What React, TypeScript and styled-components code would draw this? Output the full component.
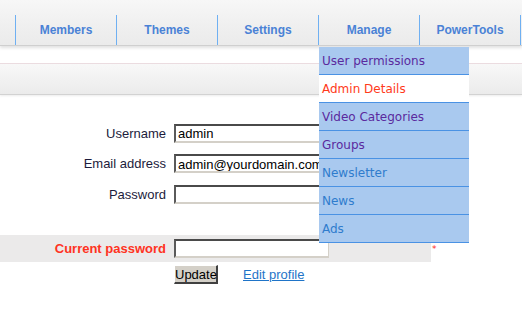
import React from "react";
import styled, { createGlobalStyle } from "styled-components";

const Global = createGlobalStyle`
  html, body { margin: 0; padding: 0; background: #ffffff; }
  body { font-family: "Liberation Sans", Arial, sans-serif; overflow: hidden; }
`;

const Page = styled.div`
  width: 522px;
  height: 326px;
  position: relative;
  overflow: hidden;
  background: #fff;
`;

const NavBar = styled.div`
  height: 45px;
  background: linear-gradient(#f7f7f7, #efefef 60%, #ebebeb);
  border-bottom: 1px solid #cfcfcf;
  box-shadow: 0 2px 3px rgba(0, 0, 0, 0.12);
  display: flex;
  align-items: flex-end;
  padding-left: 15px;
  position: relative;
  z-index: 2;
`;

const Tab = styled.div`
  position: relative;
  width: 101px;
  height: 30px;
  border-left: 1px solid #6fb0f2;
  display: flex;
  align-items: center;
  justify-content: center;
  font-family: "Liberation Sans", Arial, sans-serif;
  font-weight: bold;
  font-size: 12px;
  color: #4a82d6;
  padding-bottom: 1px;
  box-sizing: border-box;
`;

const LastEdge = styled.div`
  width: 1px;
  height: 30px;
  border-left: 1px solid #6fb0f2;
`;

const Menu = styled.ul`
  position: absolute;
  top: 32px;
  left: 0;
  width: 150px;
  margin: 0;
  padding: 0;
  list-style: none;
  z-index: 5;
`;

const MenuItem = styled.li<{ $active?: boolean; $tone: "visited" | "link" | "current" }>`
  height: 27px;
  border-bottom: 1px solid #4a92e4;
  background: ${(p) => (p.$active ? "#ffffff" : "#a9c9ef")};
  color: ${(p) =>
    p.$tone === "current" ? "#ff3a1a" : p.$tone === "visited" ? "#5b2a9e" : "#2f7ccd"};
  font-family: "DejaVu Sans", Verdana, sans-serif;
  font-size: 12px;
  font-weight: normal;
  line-height: 29px;
  padding-left: 3px;
  text-align: left;
  white-space: nowrap;
`;

const Gap = styled.div`
  height: 17px;
  border-bottom: 1px solid #ecdde1;
`;

const SubBar = styled.div`
  height: 30px;
  background: linear-gradient(#f8f8f8, #efefef 70%, #ebebeb);
  border-bottom: 1px solid #d2d2d2;
  box-shadow: 0 1px 2px rgba(0, 0, 0, 0.08);
`;

const Form = styled.div`
  margin-top: 23px;
  width: 431px;
`;

const Row = styled.div<{ $h: number; $band?: boolean }>`
  display: flex;
  align-items: center;
  height: ${(p) => p.$h}px;
  background: ${(p) => (p.$band ? "#ebeaea" : "transparent")};
  position: relative;
`;

const Label = styled.label<{ $required?: boolean }>`
  width: 166px;
  margin-right: 8px;
  text-align: right;
  font-family: "Liberation Sans", Arial, sans-serif;
  font-size: 13px;
  font-weight: ${(p) => (p.$required ? "bold" : "normal")};
  color: ${(p) => (p.$required ? "#ff3322" : "#1c1c3c")};
`;

const Field = styled.input`
  width: 155px;
  height: 19px;
  box-sizing: border-box;
  margin: 0;
  padding: 1px 2px 0;
  border-style: solid;
  border-width: 2px 1px 2px 2px;
  border-color: #4a4a4a #d4d0c8 #d4d0c8 #5a5a5a;
  background: #fff;
  font-family: "Liberation Sans", Arial, sans-serif;
  font-size: 13px;
  color: #000;
  outline: none;
`;

const Star = styled.span`
  position: absolute;
  left: 432px;
  top: 10px;
  color: #ff2a1a;
  font-size: 9px;
  font-family: "DejaVu Sans", sans-serif;
  line-height: 9px;
`;

const Actions = styled.div`
  display: flex;
  align-items: center;
  margin-top: 3px;
  padding-left: 174px;
`;

const Button = styled.button`
  height: 19px;
  padding: 0;
  width: 44px;
  margin: 0;
  background: #d4d0c8;
  border-style: solid;
  border-width: 1px 2px 2px 1px;
  border-color: #ffffff #404040 #404040 #ffffff;
  font-family: "Liberation Sans", Arial, sans-serif;
  font-size: 13px;
  color: #000;
  line-height: 15px;
`;

const EditLink = styled.a`
  margin-left: 25px;
  font-family: "Liberation Sans", Arial, sans-serif;
  font-size: 13px;
  color: #1f74c8;
  text-decoration: underline;
`;

const tabs = ["Members", "Themes", "Settings", "Manage", "PowerTools"];
const menu: { label: string; tone: "visited" | "link" | "current"; active?: boolean }[] = [
  { label: "User permissions", tone: "visited" },
  { label: "Admin Details", tone: "current", active: true },
  { label: "Video Categories", tone: "visited" },
  { label: "Groups", tone: "visited" },
  { label: "Newsletter", tone: "link" },
  { label: "News", tone: "link" },
  { label: "Ads", tone: "link" },
];

export default function App() {
  return (
    <Page>
      <Global />
      <NavBar>
        {tabs.map((t) => (
          <Tab key={t}>
            {t}
            {t === "Manage" && (
              <Menu>
                {menu.map((m) => (
                  <MenuItem key={m.label} $tone={m.tone} $active={m.active}>
                    {m.label}
                  </MenuItem>
                ))}
              </Menu>
            )}
          </Tab>
        ))}
        <LastEdge />
      </NavBar>
      <Gap />
      <SubBar />
      <Form>
        <Row $h={30}>
          <Label>Username</Label>
          <Field defaultValue="admin" spellCheck={false} />
        </Row>
        <Row $h={31}>
          <Label>Email address</Label>
          <Field defaultValue="admin@yourdomain.com" spellCheck={false} />
        </Row>
        <Row $h={31}>
          <Label>Password</Label>
          <Field type="password" />
        </Row>
        <Row $h={25} />
        <Row $h={27} $band>
          <Label $required>Current password</Label>
          <Field type="password" />
          <Star>*</Star>
        </Row>
        <Actions>
          <Button>Update</Button>
          <EditLink href="#">Edit profile</EditLink>
        </Actions>
      </Form>
    </Page>
  );
}
